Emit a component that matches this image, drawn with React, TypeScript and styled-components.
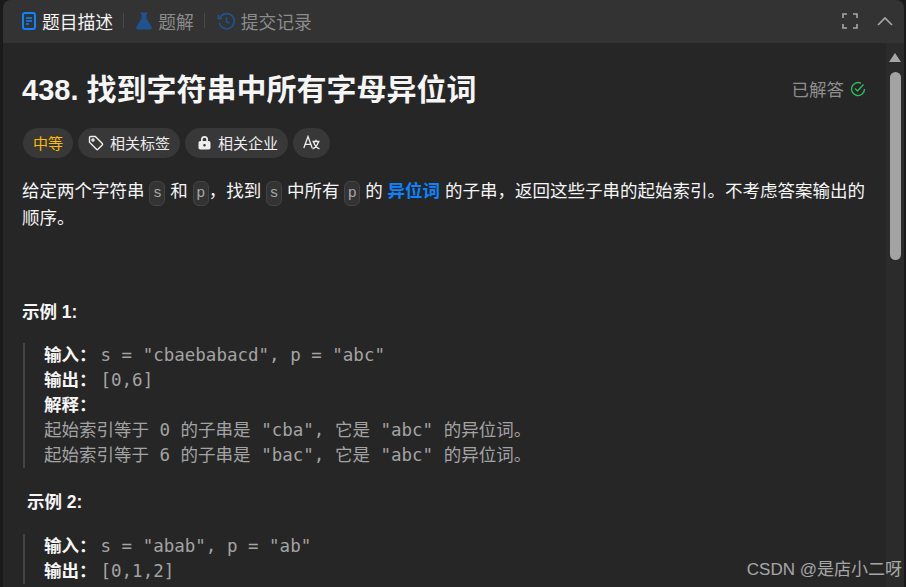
import styled, { createGlobalStyle } from "styled-components";
import { ReactNode } from "react";

const cjk = `"Liberation Sans", "Noto Sans CJK SC", sans-serif`;
const mono = `"DejaVu Sans Mono", "Noto Sans CJK SC", monospace`;

const Global = createGlobalStyle`
	html, body {
		margin: 0;
		padding: 0;
		width: 906px;
		height: 587px;
		overflow: hidden;
		background: #1a1a1a;
	}
`;

const Page = styled.div`
	position: relative;
	width: 906px;
	height: 587px;
	padding: 0 2px 0 3px;
	box-sizing: border-box;
	font-family: ${cjk};
`;

const Panel = styled.div`
	height: 100%;
	display: flex;
	flex-direction: column;
	overflow: hidden;
	border-radius: 8px 8px 0 0;
	background: #262626;
`;

const TabBar = styled.div`
	flex: none;
	height: 43px;
	display: flex;
	align-items: center;
	padding: 0 11px 2px 19px;
	box-sizing: border-box;
	background: #333333;
`;

const Tab = styled.div<{ $active?: boolean }>`
	display: flex;
	align-items: center;
	gap: 6px;
	font-size: 17.8px;
	color: ${(p) => (p.$active ? "#f5f5f5" : "#8c8c8c")};
`;

const TabDivider = styled.div`
	width: 1px;
	height: 15px;
	margin: 0 12px 0 10px;
	background: #4a4a4a;
`;

const TabActions = styled.div`
	margin-left: auto;
	display: flex;
	align-items: center;
	gap: 19px;
`;

const Main = styled.div`
	flex: 1;
	min-height: 0;
	display: flex;
`;

const Content = styled.div`
	flex: 1;
	min-width: 0;
	padding: 27px 20px 0 19px;
	overflow: hidden;
`;

const TitleRow = styled.div`
	display: flex;
	align-items: center;
	justify-content: space-between;
	height: 40px;
`;

const Title = styled.h1`
	margin: 0;
	font-size: 29px;
	line-height: 40px;
	font-weight: 700;
	color: #f5f5f5;
`;

const TitleCjk = styled.span`
	font-size: 30px;
`;

const Solved = styled.div`
	display: flex;
	align-items: center;
	gap: 6px;
	margin-top: -3px;
	font-size: 17.5px;
	color: #8f8f8f;
`;

const Tags = styled.div`
	display: flex;
	gap: 5px;
	margin-top: 18px;
	margin-left: 1px;
`;

const Tag = styled.div<{ $warn?: boolean; $lead?: number }>`
	height: 30px;
	box-sizing: border-box;
	display: flex;
	align-items: center;
	gap: 6px;
	padding: 0 10px 1px ${(p) => p.$lead ?? 10}px;
	border-radius: 15px;
	background: #383838;
	font-size: 15px;
	color: ${(p) => (p.$warn ? "#ffb800" : "#eeeeee")};
`;

const Desc = styled.p`
	margin: 20px 0 0;
	font-size: 17.5px;
	line-height: 27px;
	color: #f5f5f5;
`;

const Code = styled.code`
	display: inline-block;
	height: 25px;
	line-height: 23px;
	box-sizing: border-box;
	margin: -4px 0;
	padding: 0 2.5px;
	border: 1px solid #444444;
	border-radius: 6px;
	background: #333333;
	font-family: "Liberation Mono", monospace;
	font-size: 15px;
	color: #a8a8a8;
	vertical-align: 0;
`;

const Link = styled.b`
	color: #0a84ff;
`;

const ExampleTitle = styled.div<{ $indent?: number; $top: number }>`
	margin: ${(p) => p.$top}px 0 0 ${(p) => p.$indent ?? 0}px;
	font-size: 17.5px;
	line-height: 24px;
	font-weight: 700;
	color: #f5f5f5;
`;

const Quote = styled.div<{ $top: number }>`
	margin: ${(p) => p.$top}px 0 0 1px;
	padding: 0 0 0 19px;
	border-left: 2px solid #444444;
	font-family: ${mono};
	line-height: 25px;
	color: #a3a3a3;
	white-space: pre;
`;

const Line = styled.div`
	height: 25px;
	font-size: 17.5px;
`;

const Key = styled.b`
	font-family: ${cjk};
	font-size: 17.5px;
	color: #f5f5f5;
	margin-right: 4px;
`;

const ScrollTrack = styled.div`
	flex: none;
	width: 18px;
	display: flex;
	flex-direction: column;
	align-items: center;
	background: #2b2b2b;
`;

const ScrollArrow = styled.div`
	margin-top: 10px;
	width: 0;
	height: 0;
	border-left: 6px solid transparent;
	border-right: 6px solid transparent;
	border-bottom: 9px solid #a6a6a6;
`;

const ScrollThumb = styled.div`
	width: 11px;
	height: 188px;
	margin-top: 10px;
	border-radius: 6px;
	background: #a3a3a3;
`;

const Watermark = styled.div`
	position: absolute;
	right: 4px;
	bottom: 7px;
	font-size: 17px;
	line-height: 20px;
	color: rgba(255, 255, 255, 0.6);
	white-space: nowrap;
`;

const DocIcon = () => (
	<svg width="14" height="18" viewBox="0 0 14 18" fill="none">
		<rect x="1" y="1" width="12" height="16" rx="2" stroke="#0a84ff" strokeWidth="2" />
		<path d="M4 6h6M4 9h6M4 12h3" stroke="#0a84ff" strokeWidth="1.6" />
	</svg>
);

const FlaskIcon = () => (
	<svg width="16" height="18" viewBox="0 0 16 18">
		<path
			d="M4.500 0.500h7v1.600h-1v4.400l5 8.300c.7 1.200-.1 2.700-1.500 2.700H2c-1.400 0-2.200-1.500-1.500-2.700l5-8.300V2.100h-1z"
			fill="#1f5390"
		/>
	</svg>
);

const HistoryIcon = () => (
	<svg width="18" height="18" viewBox="0 0 19 18" fill="none" stroke="#1f5390" strokeWidth="1.8">
		<path d="M3.200 5.500A8 8 0 1 1 2.500 11" />
		<path d="M1.500 2.500v3.800h3.800" />
		<path d="M10 5v4.500l3 2" />
	</svg>
);

const ExpandIcon = () => (
	<svg width="16" height="16" viewBox="0 0 16 16" fill="none" stroke="#a8a8a8" strokeWidth="1.6">
		<path d="M1 5V1h4M11 1h4v4M15 11v4h-4M5 15H1v-4" />
	</svg>
);

const ChevronIcon = () => (
	<svg width="16" height="10" viewBox="0 0 16 10" fill="none" stroke="#a8a8a8" strokeWidth="1.6">
		<path d="M1 9l7-7 7 7" />
	</svg>
);

const CheckIcon = () => (
	<svg width="16" height="16" viewBox="0 0 16 16" fill="none" stroke="#2cbb5d" strokeWidth="1.4">
		<path d="M14.500 8A6.500 6.500 0 1 1 11 2.300" />
		<path d="M5 7.500l2.500 2.500 6-6.500" />
	</svg>
);

const TagIcon = () => (
	<svg width="16" height="16" viewBox="0 0 16 16" fill="none" stroke="#eeeeee" strokeWidth="1.4">
		<path d="M1.500 2.500a1 1 0 0 1 1-1h4.800l7 7a1 1 0 0 1 0 1.400l-4.400 4.400a1 1 0 0 1-1.400 0l-7-7z" />
		<circle cx="5" cy="5" r="1" />
	</svg>
);

const LockIcon = () => (
	<svg width="15" height="15" viewBox="0 0 14 15">
		<path
			d="M3.500 6V4.500a3.500 3.500 0 0 1 7 0V6h.8c.9 0 1.700.8 1.700 1.700v5.100c0 .9-.8 1.700-1.700 1.700H2.700c-.9 0-1.700-.8-1.700-1.700V7.700C1 6.800 1.800 6 2.700 6zm1.700 0h3.600V4.500a1.800 1.800 0 0 0-3.600 0zM7 9a1.300 1.300 0 1 0 0 2.600A1.300 1.300 0 0 0 7 9z"
			fill="#eeeeee"
			fillRule="evenodd"
		/>
	</svg>
);

// translate glyph: a capital A with a small wen next to it
const TranslateIcon = () => (
	<svg width="17" height="15" viewBox="0 0 17 15" fill="none" stroke="#eeeeee" strokeWidth="1.3">
		<path d="M0.800 13L5 1.500 9.200 13M2.200 9.300h5.600" />
		<path d="M9.500 6.500h7M13 4.800v1.700M10.500 6.500c.8 3.500 2.800 6 6 7.500M15.500 6.500c-.8 3.500-2.800 6-6 7.500" />
	</svg>
);

function Row({ label, children }: { label?: string; children?: ReactNode }) {
	return (
		<Line>
			{label && <Key>{label}</Key>}
			{children}
		</Line>
	);
}

export default function App() {
	return (
		<>
			<Global />
			<Page>
				<Panel>
					<TabBar>
						<Tab $active>
							<DocIcon />
							题目描述
						</Tab>
						<TabDivider />
						<Tab>
							<FlaskIcon />
							题解
						</Tab>
						<TabDivider />
						<Tab>
							<HistoryIcon />
							提交记录
						</Tab>
						<TabActions>
							<ExpandIcon />
							<ChevronIcon />
						</TabActions>
					</TabBar>
					<Main>
						<Content>
							<TitleRow>
								<Title>
									438. <TitleCjk>找到字符串中所有字母异位词</TitleCjk>
								</Title>
								<Solved>
									已解答
									<CheckIcon />
								</Solved>
							</TitleRow>
							<Tags>
								<Tag $warn>中等</Tag>
								<Tag>
									<TagIcon />
									相关标签
								</Tag>
								<Tag $lead={12}>
									<LockIcon />
									相关企业
								</Tag>
								<Tag>
									<TranslateIcon />
								</Tag>
							</Tags>
							<Desc>
								给定两个字符串 <Code>s</Code> 和 <Code>p</Code>，找到 <Code>s</Code> 中所有 <Code>p</Code> 的{" "}
								<Link>异位词</Link> 的子串，返回这些子串的起始索引。不考虑答案输出的顺序。
							</Desc>
							<ExampleTitle $top={68}>示例 1:</ExampleTitle>
							<Quote $top={19}>
								<Row label="输入：">s = "cbaebabacd", p = "abc"</Row>
								<Row label="输出：">[0,6]</Row>
								<Row label="解释：" />
								<Row>起始索引等于 0 的子串是 "cba", 它是 "abc" 的异位词。</Row>
								<Row>起始索引等于 6 的子串是 "bac", 它是 "abc" 的异位词。</Row>
							</Quote>
							<ExampleTitle $top={22} $indent={5}>
								示例 2:
							</ExampleTitle>
							<Quote $top={20}>
								<Row label="输入：">s = "abab", p = "ab"</Row>
								<Row label="输出：">[0,1,2]</Row>
							</Quote>
						</Content>
						<ScrollTrack>
							<ScrollArrow />
							<ScrollThumb />
						</ScrollTrack>
					</Main>
				</Panel>
				<Watermark>CSDN @是店小二呀</Watermark>
			</Page>
		</>
	);
}
